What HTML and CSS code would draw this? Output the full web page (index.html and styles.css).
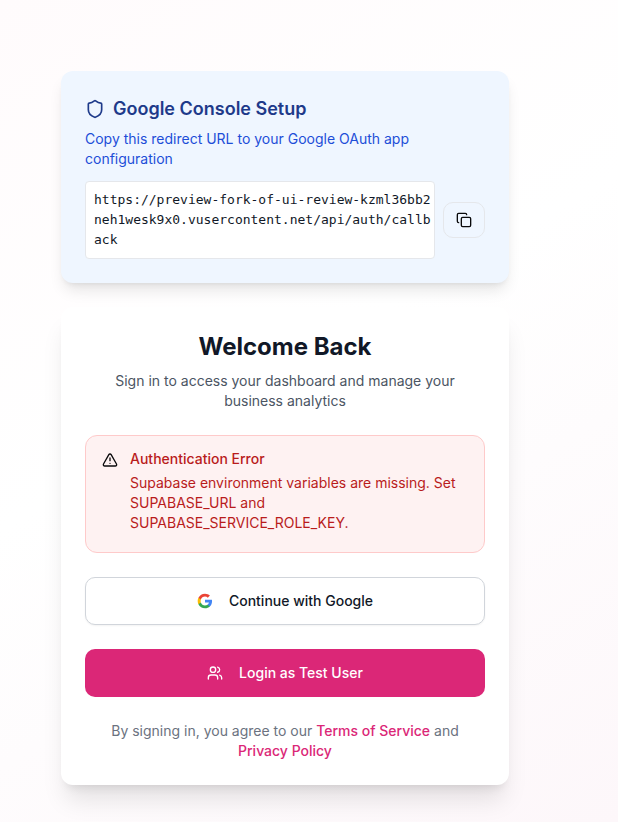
FILE: index.html
```html
<!DOCTYPE html>
<html lang="en">
<head>
<meta charset="utf-8">
<meta name="viewport" content="width=device-width, initial-scale=1">
<title>Sign in</title>
<link rel="stylesheet" href="styles.css">
</head>
<body>
<main class="page">
  <div class="stack">
    <section class="card card-setup">
      <h2 class="setup-title">
        <svg class="icon icon-lg" viewBox="0 0 24 24" aria-hidden="true"><path d="M20 13c0 5-3.500 7.500-7.660 8.950a1 1 0 0 1-.67-.01C7.500 20.500 4 18 4 13V6a1 1 0 0 1 1-1c2 0 4.500-1.200 6.240-2.720a1.170 1.170 0 0 1 1.520 0C14.510 3.810 17 5 19 5a1 1 0 0 1 1 1z"/></svg>
        Google Console Setup
      </h2>
      <p class="setup-text">Copy this redirect URL to your Google OAuth app configuration</p>
      <div class="url-row">
        <code class="url">https://preview-fork-of-ui-review-kzml36bb2neh1wesk9x0.vusercontent.net/api/auth/callback</code>
        <button class="copy" type="button" aria-label="Copy redirect URL">
          <svg class="icon" viewBox="0 0 24 24" aria-hidden="true"><rect width="14" height="14" x="8" y="8" rx="2" ry="2"/><path d="M4 16c-1.100 0-2-.9-2-2V4c0-1.100.9-2 2-2h10c1.100 0 2 .9 2 2"/></svg>
        </button>
      </div>
    </section>

    <section class="card card-login">
      <header class="intro">
        <h1 class="intro-title">Welcome Back</h1>
        <p class="intro-text">Sign in to access your dashboard and manage your business analytics</p>
      </header>
      <div class="alert" role="alert">
        <svg class="icon alert-icon" viewBox="0 0 24 24" aria-hidden="true"><path d="m21.730 18-8-14a2 2 0 0 0-3.480 0l-8 14A2 2 0 0 0 4 21h16a2 2 0 0 0 1.730-3"/><path d="M12 9v4"/><path d="M12 17h.01"/></svg>
        <div>
          <h3 class="alert-title">Authentication Error</h3>
          <p class="alert-text">Supabase environment variables are missing. Set SUPABASE_URL and SUPABASE_SERVICE_ROLE_KEY.</p>
        </div>
      </div>
      <button class="btn btn-google" type="button">
        <svg class="icon-google" viewBox="0 0 24 24" aria-hidden="true">
          <path fill="#4285f4" d="M22.560 12.250c0-.78-.07-1.530-.2-2.250H12v4.260h5.920c-.26 1.370-1.040 2.530-2.210 3.310v2.770h3.570c2.080-1.920 3.280-4.740 3.280-8.090z"/>
          <path fill="#34a853" d="M12 23c2.970 0 5.460-.98 7.280-2.660l-3.570-2.770c-.98.66-2.230 1.060-3.710 1.060-2.860 0-5.290-1.930-6.160-4.530H2.180v2.840C3.990 20.530 7.700 23 12 23z"/>
          <path fill="#fbbc05" d="M5.840 14.090c-.22-.66-.35-1.360-.35-2.090s.13-1.430.35-2.090V7.070H2.180C1.430 8.550 1 10.220 1 12s.43 3.450 1.180 4.930l2.850-2.220.81-.62z"/>
          <path fill="#ea4335" d="M12 5.380c1.620 0 3.060.56 4.210 1.640l3.150-3.150C17.450 2.090 14.970 1 12 1 7.700 1 3.990 3.470 2.180 7.070l3.660 2.840c.87-2.600 3.300-4.530 6.160-4.530z"/>
        </svg>
        Continue with Google
      </button>
      <button class="btn btn-test" type="button">
        <svg class="icon" viewBox="0 0 24 24" aria-hidden="true"><path d="M16 21v-2a4 4 0 0 0-4-4H6a4 4 0 0 0-4 4v2"/><circle cx="9" cy="7" r="4"/><path d="M22 21v-2a4 4 0 0 0-3-3.870"/><path d="M16 3.130a4 4 0 0 1 0 7.750"/></svg>
        Login as Test User
      </button>
      <p class="legal">By signing in, you agree to our <a class="link" href="#terms">Terms of Service</a> and <a class="link" href="#privacy">Privacy Policy</a></p>
    </section>
  </div>
</main>
</body>
</html>
```
FILE: styles.css
```css
* {
  box-sizing: border-box;
  margin: 0;
}

body {
  font-family: Inter, "Liberation Sans", sans-serif;
  font-size: 14px;
  line-height: 20px;
  color: #111827;
}

.page {
  min-height: 100vh;
  padding: 71px 64px 37px 16px;
  background: linear-gradient(150deg, #fffbfc 0%, #ffffff 45%, #fefcfd 65%, #fdf7fa 100%);
}

.stack {
  display: grid;
  gap: 24px;
  max-width: 448px;
  margin: 0 auto;
}

.card {
  padding: 24px;
  border-radius: 12px;
}

.card-setup {
  background: #eff6ff;
  box-shadow: 0 10px 15px -3px rgb(0 0 0 / 0.1), 0 4px 6px -4px rgb(0 0 0 / 0.1);
}

.card-login {
  display: grid;
  gap: 24px;
  background: #ffffff;
  box-shadow: 0 20px 25px -5px rgb(0 0 0 / 0.1), 0 8px 10px -6px rgb(0 0 0 / 0.1);
}

.icon {
  flex: none;
  width: 16px;
  height: 16px;
  fill: none;
  stroke: currentColor;
  stroke-width: 2;
  stroke-linecap: round;
  stroke-linejoin: round;
}

.icon-lg {
  width: 20px;
  height: 20px;
}

.icon-google {
  flex: none;
  width: 16px;
  height: 16px;
}

.setup-title {
  display: flex;
  align-items: center;
  gap: 8px;
  font-size: 18px;
  line-height: 28px;
  font-weight: 600;
  color: #1e3a8a;
}

.setup-text {
  margin-top: 6px;
  color: #1d4ed8;
}

.url-row {
  display: flex;
  align-items: center;
  gap: 8px;
  margin-top: 12px;
}

.url {
  flex: 1;
  min-width: 0;
  padding: 8px 2px 8px 8px;
  border: 1px solid #e5e7eb;
  border-radius: 4px;
  background: #ffffff;
  font-family: "DejaVu Sans Mono", "Liberation Mono", monospace;
  font-size: 13px;
  word-break: break-all;
}

.copy {
  display: flex;
  align-items: center;
  height: 36px;
  padding: 0 12px;
  border: 1px solid #e5e7eb;
  border-radius: 10px;
  background: transparent;
  color: #09090b;
}

.intro {
  text-align: center;
}

.intro-title {
  font-size: 24px;
  line-height: 32px;
  font-weight: 700;
}

.intro-text {
  margin-top: 8px;
  padding: 0 24px;
  color: #4b5563;
}

.alert {
  display: flex;
  gap: 12px;
  padding: 13px 16px 19px;
  border: 1px solid #fecaca;
  border-radius: 12px;
  background: #fef2f2;
}

.alert-icon {
  margin-top: 3px;
  color: #09090b;
}

.alert-title {
  font-size: 14px;
  font-weight: 500;
  color: #b91c1c;
}

.alert-text {
  margin-top: 4px;
  color: #b91c1c;
}

.btn {
  display: flex;
  align-items: center;
  justify-content: center;
  gap: 16px;
  height: 48px;
  border-radius: 10px;
  font: inherit;
  font-weight: 500;
}

.btn-google {
  border: 1px solid #d1d5db;
  background: #ffffff;
  color: #111827;
  box-shadow: 0 1px 2px rgb(0 0 0 / 0.05);
}

.btn-test {
  border: 0;
  background: #db2777;
  color: #ffffff;
}

.legal {
  text-align: center;
  color: #6b7280;
}

.link {
  font-weight: 500;
  color: #db2777;
  text-decoration: none;
}
```
